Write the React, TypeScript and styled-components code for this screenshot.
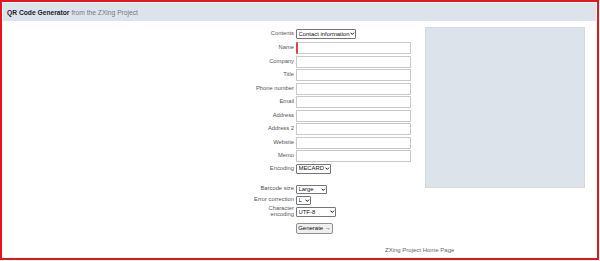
import React from 'react';
import styled, { createGlobalStyle } from 'styled-components';

const GlobalStyle = createGlobalStyle`
  html, body {
    margin: 0;
    padding: 0;
    background: #ffffff;
    font-family: Arial, "Liberation Sans", sans-serif;
  }
`;

const Frame = styled.div`
  box-sizing: border-box;
  width: 599px;
  height: 260px;
  border: 2px solid #e8141b;
  background: #ffffff;
  overflow: hidden;
`;

const Header = styled.div`
  margin: 1px 1px 0 1px;
  height: 18px;
  background: #dde3ea;
  display: flex;
  align-items: center;
  padding-left: 4px;
  font-size: 6.7px;
  color: #222;
`;

const Title = styled.span`
  font-weight: bold;
  margin-right: 2px;
`;

const Sub = styled.span`
  color: #7a7a7a;
`;

const Main = styled.div`
  display: flex;
  align-items: flex-start;
  gap: 14px;
  padding: 6px 0 0 248px;
`;

const Form = styled.div`
  display: flex;
  flex-direction: column;
  margin-top: 2px;
  width: 161px;
`;

const Row = styled.div<{ $top?: number; $h?: number }>`
  display: flex;
  align-items: center;
  gap: 2px;
  margin-top: ${({ $top }) => $top ?? 1.5}px;
  height: ${({ $h }) => $h ?? 12}px;
`;

const Label = styled.label`
  width: 44px;
  flex: none;
  text-align: right;
  font-size: 5.8px;
  line-height: 5.6px;
  color: #555;
`;

const TextInput = styled.input<{ $focus?: boolean }>`
  box-sizing: border-box;
  width: 115px;
  height: 12px;
  margin: 0;
  padding: 0 2px;
  border: 1px solid #c9c9c9;
  border-left: ${({ $focus }) => ($focus ? '2px solid #e0443a' : '1px solid #c9c9c9')};
  background: #fff;
  font-size: 6px;
  outline: none;
`;

const SelectWrap = styled.div<{ $w: number; $h?: number }>`
  position: relative;
  flex: none;
  width: ${({ $w }) => $w}px;
  height: ${({ $h }) => $h ?? 10}px;
`;

const Select = styled.select`
  display: block;
  appearance: none;
  -webkit-appearance: none;
  box-sizing: border-box;
  width: 100%;
  height: 100%;
  min-height: 0;
  margin: 0;
  padding: 0 5px 0 1.5px;
  border: 1px solid #767676;
  border-radius: 1px;
  background: #fff;
  color: #111;
  font-family: Arial, "Liberation Sans", sans-serif;
  font-size: 5.9px;
  line-height: 7px;
  overflow: hidden;
`;

const Chevron = styled.svg`
  position: absolute;
  right: 1.5px;
  top: 50%;
  width: 4.5px;
  height: 3.5px;
  margin-top: -1.75px;
  pointer-events: none;
`;

const Button = styled.button`
  box-sizing: border-box;
  width: 37px;
  height: 11px;
  margin: 0;
  padding: 0;
  border: 1px solid #8f8f8f;
  border-radius: 2px;
  background: #efefef;
  color: #111;
  font-family: Arial, "Liberation Sans", sans-serif;
  font-size: 6px;
`;

const Spacer = styled.div`
  width: 44px;
  flex: none;
`;

const Preview = styled.div`
  width: 160px;
  height: 161px;
  background: #dce3ea;
  border: 1px solid #d3dae2;
  box-sizing: border-box;
`;

const Footer = styled.div`
  padding: 13px 0 0 383px;
  font-size: 6px;
  color: #666;
`;

const fields = ['Name', 'Company', 'Title', 'Phone number', 'Email', 'Address', 'Address 2', 'Website', 'Memo'];

function Drop({ w, h, value }: { w: number; h?: number; value: string }) {
  return (
    <SelectWrap $w={w} $h={h}>
      <Select defaultValue={value}>
        <option value={value}>{value}</option>
      </Select>
      <Chevron viewBox="0 0 10 8">
        <path d="M1 1.5 L5 5.5 L9 1.5" fill="none" stroke="#111" strokeWidth="2.2" />
      </Chevron>
    </SelectWrap>
  );
}

export default function App() {
  return (
    <>
      <GlobalStyle />
      <Frame>
        <Header>
          <Title>QR Code Generator</Title>
          <Sub>from the ZXing Project</Sub>
        </Header>
        <Main>
          <Form>
            <Row $top={0} $h={10}>
              <Label>Contents</Label>
              <Drop w={60} value="Contact information" />
            </Row>
            {fields.map((f, i) => (
              <Row key={f} $top={i === 0 ? 3 : 1.5}>
                <Label>{f}</Label>
                <TextInput $focus={i === 0} />
              </Row>
            ))}
            <Row $top={1.5} $h={10}>
              <Label>Encoding</Label>
              <Drop w={35} value="MECARD" />
            </Row>
            <Row $top={11} $h={9.5}>
              <Label>Barcode size</Label>
              <Drop w={31} h={9.5} value="Large" />
            </Row>
            <Row $top={1.5} $h={9.5}>
              <Label>Error correction</Label>
              <Drop w={15} h={9.5} value="L" />
            </Row>
            <Row $top={1.5} $h={11}>
              <Label>Character encoding</Label>
              <Drop w={40} value="UTF-8" />
            </Row>
            <Row $top={5} $h={11}>
              <Spacer />
              <Button>Generate →</Button>
            </Row>
          </Form>
          <Preview />
        </Main>
        <Footer>ZXing Project Home Page</Footer>
      </Frame>
    </>
  );
}
